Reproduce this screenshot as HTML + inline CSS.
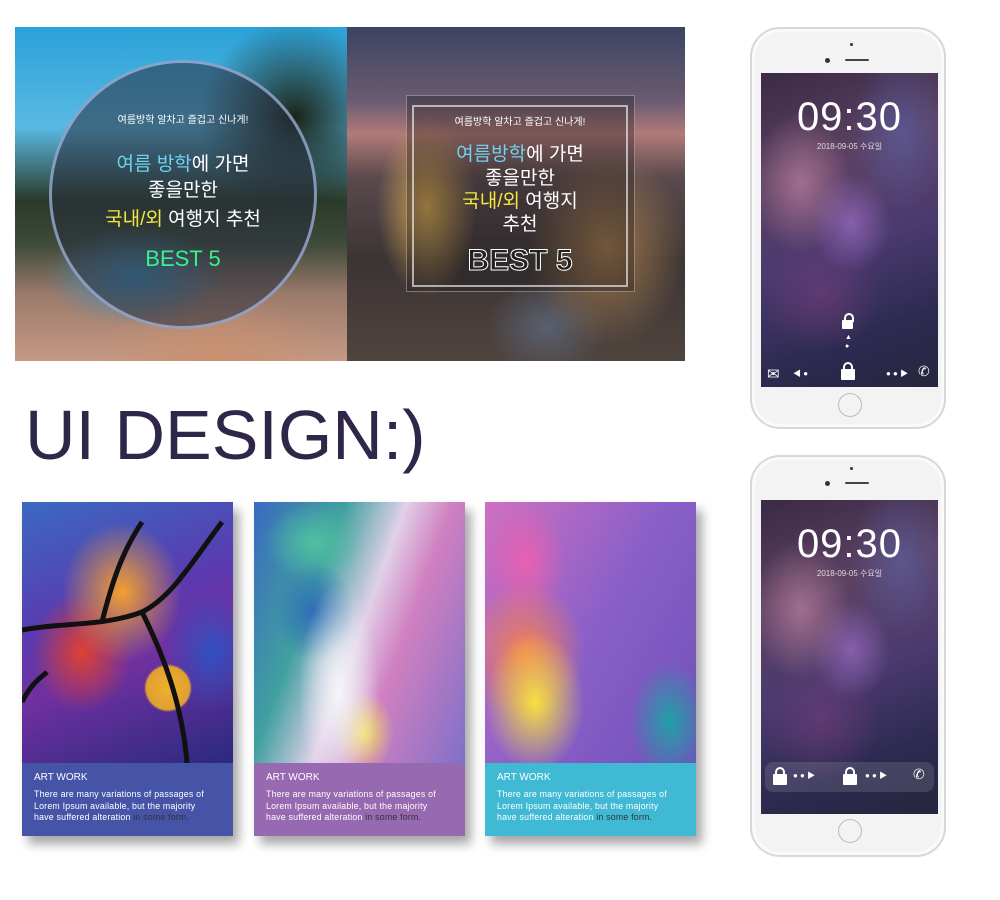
<!DOCTYPE html>
<html><head><meta charset="utf-8"><style>
*{margin:0;padding:0;box-sizing:border-box}
body{width:1000px;height:900px;background:#fff;position:relative;overflow:hidden;font-family:"Liberation Sans","Noto Sans CJK KR",sans-serif}
.a{position:absolute}
#b1{left:15px;top:27px;width:332px;height:334px;background:
radial-gradient(ellipse 120px 60px at 200px 330px,#c98f6e 0%,transparent 100%),
radial-gradient(ellipse 90px 50px at 120px 250px,#3b8db7 0%,transparent 100%),
radial-gradient(ellipse 120px 120px at 280px 90px,#1b2418 0%,transparent 80%),
linear-gradient(180deg,#2aa2d8 0%,#59b9e2 30%,#2b3a2a 52%,#3e4a3a 65%,#9b7a6a 80%,#c59a86 100%)}
#b2{left:347px;top:27px;width:338px;height:334px;background:
radial-gradient(ellipse 50px 90px at 80px 180px,#d3a54f 0%,transparent 100%),
radial-gradient(ellipse 80px 100px at 260px 220px,#a0774c 0%,transparent 100%),
radial-gradient(ellipse 60px 50px at 200px 300px,#5a6070 0%,transparent 100%),
linear-gradient(180deg,#3c4362 0%,#6a5b72 22%,#b27a78 32%,#5a4a4e 45%,#3b3434 70%,#50443e 100%)}
#circ{left:49px;top:60px;width:268px;height:269px;border-radius:50%;background:rgba(40,45,60,.55);border:3px solid rgba(170,190,235,.7)}
.kt{position:absolute;width:100%;text-align:center;color:#fff;font-size:19px;line-height:28px}
#sq{left:406px;top:95px;width:229px;height:197px;background:rgba(30,25,30,.35);border:1px solid rgba(255,255,255,.35)}
#sqi{left:412px;top:105px;width:216px;height:182px;border:2px solid rgba(255,255,255,.6)}
#title{left:25px;top:395px;font-size:70px;color:#30264a;line-height:80px}
.card{position:absolute;top:502px;width:211px;height:334px;box-shadow:6px 8px 10px rgba(0,0,0,.35)}
.art{position:absolute;left:0;top:0;width:211px;height:261px}
.txt{position:absolute;left:0;top:261px;width:211px;height:73px;color:#fff;padding:9px 0 0 12px;white-space:nowrap}
.txt h4{font-weight:normal;font-size:10px;margin-bottom:6px}
.txt p{font-size:8.8px;line-height:11.5px;letter-spacing:.2px}
.txt span{color:#333}
.phone{position:absolute;left:750px;width:196px;height:402px;border-radius:30px;background:#f3f3f3;border:2px solid #d8d8d8;box-shadow:inset 0 0 0 3px #fafafa}
.scr{position:absolute;left:9px;width:177px;background:
radial-gradient(ellipse 50px 70px at 40px 110px,rgba(190,130,160,.7) 0%,transparent 100%),
radial-gradient(ellipse 40px 50px at 90px 150px,rgba(160,110,200,.7) 0%,transparent 100%),
radial-gradient(ellipse 50px 80px at 140px 60px,rgba(90,100,170,.6) 0%,transparent 100%),
radial-gradient(ellipse 60px 60px at 60px 220px,rgba(110,60,120,.7) 0%,transparent 100%),
linear-gradient(160deg,#3a2a45 0%,#5c4163 30%,#4a3a6e 55%,#2c2a50 80%,#26263e 100%)}
.clk{position:absolute;width:100%;text-align:center;color:#fff;font-size:40px;top:22px;letter-spacing:1px}
.dt{position:absolute;width:100%;text-align:center;color:#ddd;font-size:8px;top:68px}
.hb{position:absolute;left:86px;width:24px;height:24px;border-radius:50%;border:1.5px solid #bbb}
.cam{position:absolute;left:73px;width:5px;height:5px;border-radius:50%;background:#333}
.spk{position:absolute;left:93px;width:24px;height:2px;background:#444;border-radius:1px}
.dot{position:absolute;left:98px;width:3px;height:3px;background:#333;border-radius:50%}
.ic{position:absolute;color:#fff;font-size:12px}
.lk{position:absolute;width:14px;height:11px;background:#fff;border-radius:1px}
.lk:before{content:"";position:absolute;left:2px;top:-7px;width:6px;height:7px;border:2px solid #fff;border-bottom:none;border-radius:5px 5px 0 0}
</style></head><body>
<div id="b1" class="a"></div>
<div id="b2" class="a"></div>
<div id="circ" class="a">
 <div class="kt" style="top:44px;font-size:10px">여름방학 알차고 즐겁고 신나게!</div>
 <div class="kt" style="top:88px"><span style="color:#6fd3ef">여름 방학</span>에 가면</div>
 <div class="kt" style="top:114px">좋을만한</div>
 <div class="kt" style="top:143px"><span style="color:#f4e83c">국내/외</span> 여행지 추천</div>
 <div class="kt" style="top:182px;color:#39f08a;font-size:22px">BEST 5</div>
</div>
<div id="sq" class="a"></div>
<div id="sqi" class="a">
 <div class="kt" style="top:2px;font-size:10px">여름방학 알차고 즐겁고 신나게!</div>
 <div class="kt" style="top:34px"><span style="color:#6fd3ef">여름방학</span>에 가면</div>
 <div class="kt" style="top:58px">좋을만한</div>
 <div class="kt" style="top:81px"><span style="color:#f4e83c">국내/외</span> 여행지</div>
 <div class="kt" style="top:104px">추천</div>
 <div class="kt" style="top:140px;font-size:30px;color:#222;-webkit-text-stroke:1px #fff;font-weight:bold">BEST 5</div>
</div>
<div id="title" class="a">UI DESIGN:)</div>

<div class="card" style="left:22px">
 <div class="art" style="background:
 radial-gradient(circle 24px at 146px 186px,#f0b030 0%,#e0a030 90%,transparent 100%),
 radial-gradient(ellipse 60px 70px at 100px 90px,#f4a030 0%,transparent 100%),
 radial-gradient(ellipse 50px 60px at 60px 150px,#e04030 0%,transparent 100%),
 radial-gradient(ellipse 50px 60px at 190px 150px,#3050c0 0%,transparent 100%),
 linear-gradient(160deg,#3a6ac0 0%,#5a3ab0 40%,#7030a0 60%,#2a2a80 100%)">
 <svg width="211" height="261" style="position:absolute;left:0;top:0"><path d="M0 128 C40 120 80 125 120 110 C150 95 170 60 200 20 M120 110 C140 150 160 200 165 261 M80 120 C90 80 100 50 120 20 M0 200 C10 180 20 175 25 170" stroke="#111" stroke-width="5" fill="none"/></svg>
 </div>
 <div class="txt" style="background:#4654a8"><h4>ART WORK</h4><p>There are many variations of passages of<br>Lorem Ipsum available, but the majority<br>have suffered alteration <span>in some form.</span></p></div>
</div>
<div class="card" style="left:254px">
 <div class="art" style="background:
 radial-gradient(ellipse 40px 110px at 85px 190px,#f4f4f8 0%,transparent 100%),
 radial-gradient(ellipse 30px 40px at 110px 230px,#f0e060 0%,transparent 100%),
 radial-gradient(ellipse 40px 50px at 60px 110px,#2e6ab8 0%,transparent 100%),
 radial-gradient(ellipse 50px 40px at 60px 40px,#50c0a0 0%,transparent 100%),
 linear-gradient(110deg,#3a6ac0 0%,#40a0a0 30%,#e0d0e8 50%,#d080c0 65%,#8070c8 100%)"></div>
 <div class="txt" style="background:#9769b0"><h4>ART WORK</h4><p>There are many variations of passages of<br>Lorem Ipsum available, but the majority<br>have suffered alteration <span>in some form.</span></p></div>
</div>
<div class="card" style="left:485px">
 <div class="art" style="background:
 radial-gradient(ellipse 50px 70px at 50px 200px,#f8e040 0%,transparent 100%),
 radial-gradient(ellipse 60px 70px at 40px 150px,#f48050 0%,transparent 100%),
 radial-gradient(ellipse 40px 60px at 40px 60px,#e860b0 0%,transparent 100%),
 radial-gradient(ellipse 40px 60px at 185px 220px,#20a0a8 0%,transparent 100%),
 linear-gradient(120deg,#d070c0 0%,#8a60c8 50%,#7050b8 100%)"></div>
 <div class="txt" style="background:#3fb9d4"><h4>ART WORK</h4><p>There are many variations of passages of<br>Lorem Ipsum available, but the majority<br>have suffered alteration <span>in some form.</span></p></div>
</div>

<div class="phone" style="top:27px">
 <div class="dot" style="top:14px"></div><div class="cam" style="top:29px"></div><div class="spk" style="top:30px"></div>
 <div class="scr" style="top:44px;height:314px">
  <div class="clk">09:30</div><div class="dt">2018-09-05 수요일</div>
  <div class="lk" style="left:81px;top:247px;width:11px;height:9px"></div>
  <div class="ic" style="left:84px;top:260px;font-size:7px;line-height:9px">▲<br>●</div>
  <div class="ic" style="left:6px;top:292px;font-size:15px">✉</div>
  <div class="ic" style="left:32px;top:295px;font-size:8px">◀ ●</div>
  <div class="lk" style="left:80px;top:296px"></div>
  <div class="ic" style="left:125px;top:295px;font-size:8px">● ● ▶</div>
  <div class="ic" style="left:157px;top:290px;font-size:14px">✆</div>
 </div>
 <div class="hb" style="top:364px"></div>
</div>
<div class="phone" style="top:455px">
 <div class="dot" style="top:10px"></div><div class="cam" style="top:24px"></div><div class="spk" style="top:25px"></div>
 <div class="scr" style="top:43px;height:314px">
  <div class="clk">09:30</div><div class="dt">2018-09-05 수요일</div>
  <div class="a" style="left:4px;top:262px;width:169px;height:30px;border-radius:8px;background:rgba(255,255,255,.12)"></div>
  <div class="lk" style="left:12px;top:274px"></div>
  <div class="ic" style="left:32px;top:270px;font-size:8px">● ● ▶</div>
  <div class="lk" style="left:82px;top:274px"></div>
  <div class="ic" style="left:104px;top:270px;font-size:8px">● ● ▶</div>
  <div class="ic" style="left:152px;top:266px;font-size:14px">✆</div>
 </div>
 <div class="hb" style="top:362px"></div>
</div>
</body></html>
